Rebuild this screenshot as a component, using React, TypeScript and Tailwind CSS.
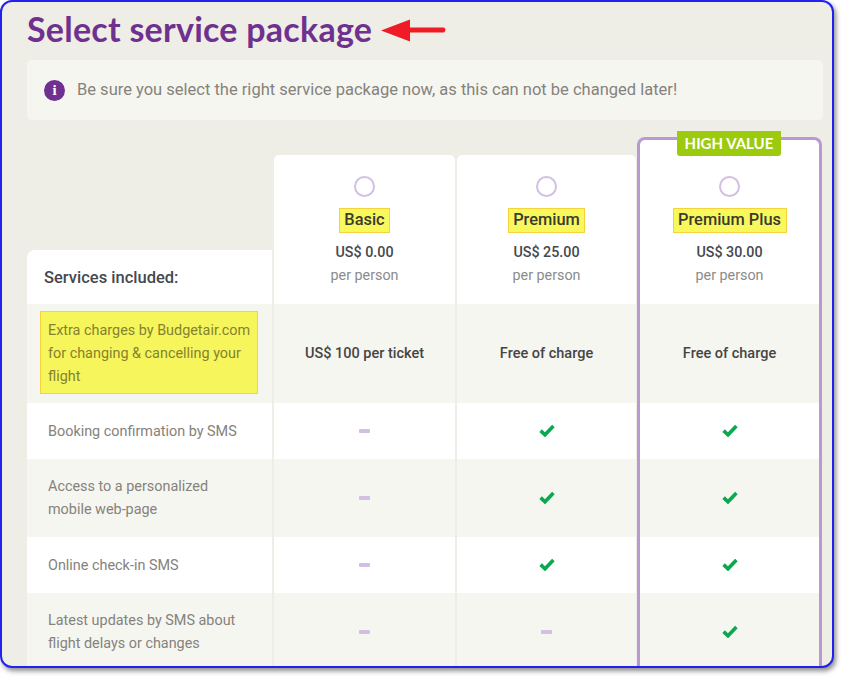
import React from "react";

const grid = "grid grid-cols-[245px_2px_181px_2px_179px_1px_185px] shrink-0";
const rob = "font-['Roboto',sans-serif]";

function Check() {
  return (
    <svg width="16" height="13" viewBox="0 0 16 13" className="block mb-[2px]">
      <path d="M1.6 6.6 L6 10.8 L14.4 2" fill="none" stroke="#0aa84f" strokeWidth="3.6" />
    </svg>
  );
}
function Dash() {
  return <div className="w-[11px] h-[4px] rounded-[1px] bg-[#d3bfe3]" />;
}

function Row({ h, alt, label, a, b, c, bold }: { h: string; alt: boolean; label: React.ReactNode; a: React.ReactNode; b: React.ReactNode; c: React.ReactNode; bold?: boolean }) {
  const bg = alt ? "bg-[#f6f6f1]" : "bg-white";
  const cell = `${bg} flex items-center justify-center ${bold ? "text-[14.5px] font-medium text-[#454545]" : ""}`;
  return (
    <div className={`${grid} ${h}`}>
      <div className={`${bg} flex items-center text-[14.4px] leading-[23px] text-[#85827c] pl-[21px] pr-[20px]`}>{label}</div>
      <div className="bg-[#eeede6]" />
      <div className={cell}>{a}</div>
      <div className="bg-[#eeede6]" />
      <div className={cell}>{b}</div>
      <div className="bg-[#eeede6]" />
      <div className={`${cell} border-x-[3px] border-[#b79ad0]`}>{c}</div>
    </div>
  );
}

function Plan({ name, price }: { name: string; price: string }) {
  return (
    <div className="flex flex-col items-center">
      <div className="w-[21px] h-[21px] rounded-full border-2 border-[#d3bfe3] mt-[21px]" />
      <div className="mt-[11px] h-[25px] px-[4.5px] flex items-center border border-[#f6d33c] bg-[#f8f85c] text-[16.4px] font-medium text-[#3a3a30]">{name}</div>
      <div className="mt-[9px] text-[14.3px] leading-[20px] font-medium text-[#45484f]">{price}</div>
      <div className="mt-[3px] text-[14.3px] leading-[20px] text-[#8b8b8b]">per person</div>
    </div>
  );
}

export default function App() {
  return (
    <div className={`w-[843px] h-[677px] bg-white ${rob}`}>
      <div className="w-[834px] h-[668px] bg-[#eeede6] border-2 border-[#2222ee] rounded-[12px] overflow-hidden shadow-[2px_3px_5px_rgba(0,0,0,0.45)] pl-[25px] pr-[9px] flex flex-col">
        <div className="flex items-center h-[58px] shrink-0 pb-[4px]">
          <h1 className="font-['Lato',sans-serif] font-bold text-[34px] leading-[54px] tracking-[0.25px] text-[#6f318f]">Select service package</h1>
          <svg width="66" height="26" viewBox="0 0 66 26" className="ml-[9px] mt-[3px]">
            <path d="M0 12.5 L29 1.5 L29 9.5 L63 9.5 Q66 12 63 14.5 L29 14.5 L29 23.5 Z" fill="#ef1c25" />
          </svg>
        </div>
        <div className="h-[60px] shrink-0 rounded-[5px] bg-[#f6f6f1] flex items-center pl-[17px]">
          <div className="w-[21px] h-[21px] rounded-full bg-[#6f318f] flex items-center justify-center text-white font-['Liberation_Serif',serif] font-bold text-[15px] leading-none">i</div>
          <p className="ml-[12px] text-[16.5px] text-[#85827c]">Be sure you select the right service package now, as this can not be changed later!</p>
        </div>
        <div className={`${grid} mt-[17px] h-[167px] items-end`}>
          <div className="h-[54px] bg-white rounded-tl-[8px] flex items-center pl-[17px] pt-[2px] text-[16.5px] font-medium text-[#45484f]">Services included:</div>
          <div />
          <div className="h-[149px] bg-white rounded-t-[5px]"><Plan name="Basic" price="US$ 0.00" /></div>
          <div />
          <div className="h-[149px] bg-white rounded-t-[5px]"><Plan name="Premium" price="US$ 25.00" /></div>
          <div />
          <div className="relative h-[167px] bg-white rounded-t-[8px] border-x-[3px] border-t-[3px] border-[#b79ad0] pt-[15px]">
            <Plan name="Premium Plus" price="US$ 30.00" />
            <div className="absolute -top-[9px] left-[37px] w-[104px] h-[25px] rounded-b-[3px] bg-[#9bcb0c] text-white font-['Lato',sans-serif] font-bold text-[15px] flex items-center justify-center">HIGH VALUE</div>
          </div>
        </div>
        <Row
          h="h-[99px]"
          alt
          bold
          label={
            <div className="shrink-0 -ml-[8px] mb-[2px] w-[218px] h-[83px] border border-[#f6d33c] bg-[#f6f65c] pl-[7px] py-[7px] text-[#85822e] font-normal">
              Extra charges by Budgetair.com for changing &amp; cancelling your flight
            </div>
          }
          a="US$ 100 per ticket"
          b="Free of charge"
          c="Free of charge"
        />
        <Row h="h-[56px]" alt={false} label="Booking confirmation by SMS" a={<Dash />} b={<Check />} c={<Check />} />
        <Row h="h-[78px]" alt label="Access to a personalized mobile web-page" a={<Dash />} b={<Check />} c={<Check />} />
        <Row h="h-[56px]" alt={false} label="Online check-in SMS" a={<Dash />} b={<Check />} c={<Check />} />
        <Row h="h-[78px]" alt label="Latest updates by SMS about flight delays or changes" a={<Dash />} b={<Dash />} c={<Check />} />
      </div>
    </div>
  );
}
